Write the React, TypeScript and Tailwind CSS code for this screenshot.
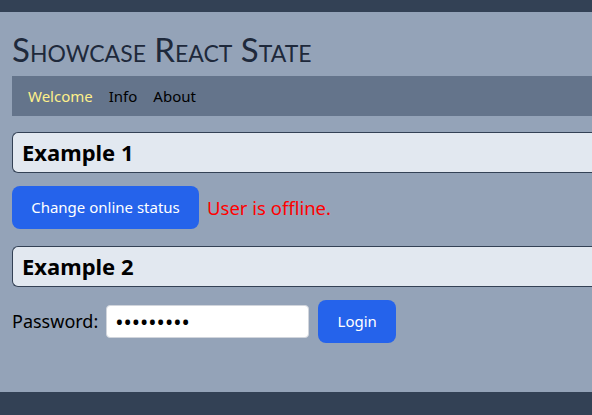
import React, { useState } from "react";

const font = { fontFamily: '"Noto Sans", "Open Sans", sans-serif' };

function SectionHeading({ title }: { title: string }) {
  return (
    <div className="flex h-[41px] items-center rounded-l-md border border-r-0 border-[#334155] bg-[#e2e8f0] pl-[9px]">
      <h2 className="text-[22px] font-bold text-black">{title}</h2>
    </div>
  );
}

export default function App() {
  const [online, setOnline] = useState(false);
  const [password, setPassword] = useState("secret123");

  return (
    <div className="flex min-h-[415px] flex-col bg-[#94a3b8]" style={font}>
      <div className="h-3 bg-[#334155]" />

      <main className="flex-1 pl-3 pb-[49px]">
        <h1
          className="mt-[18px] text-[33px] leading-[38px] text-[#1e293b]"
          style={{ fontVariant: "small-caps", fontFamily: '"Lato", sans-serif' }}
        >
          Showcase React State
        </h1>

        <nav className="mt-[8px] flex h-10 items-center gap-4 bg-[#64748b] pl-4 text-[15px]">
          <a className="text-[#fef08a]">Welcome</a>
          <a className="text-black">Info</a>
          <a className="text-black">About</a>
        </nav>

        <div className="mt-4">
          <SectionHeading title="Example 1" />
        </div>

        <div className="mt-[13px] flex items-center gap-2">
          <button
            onClick={() => setOnline(!online)}
            className="h-[43px] w-[187px] rounded-lg bg-[#2563eb] text-[15px] text-white"
          >
            Change online status
          </button>
          <span className="text-[18.5px] text-[#ff0000]">
            {online ? "User is online." : "User is offline."}
          </span>
        </div>

        <div className="mt-[17px]">
          <SectionHeading title="Example 2" />
        </div>

        <div className="mt-[13px] flex items-center">
          <label className="text-[18px] text-black">Password:</label>
          <input
            type="password"
            value={password}
            onChange={(e) => setPassword(e.target.value)}
            className="ml-2 h-[33px] w-[203px] rounded border border-gray-300 bg-white px-2 text-[22px] text-black outline-none"
          />
          <button className="ml-[9px] h-[43px] w-[78px] rounded-lg bg-[#2563eb] text-[15px] text-white">
            Login
          </button>
        </div>
      </main>

      <div className="h-[23px] bg-[#334155]" />
    </div>
  );
}
